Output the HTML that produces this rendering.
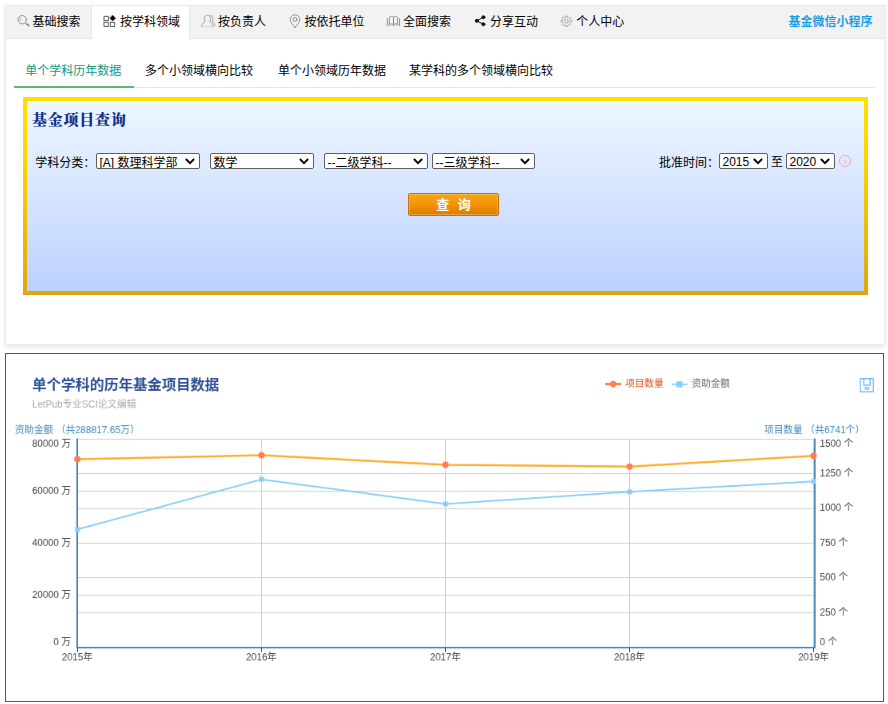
<!DOCTYPE html>
<html lang="zh-CN">
<head>
<meta charset="utf-8">
<title>基金项目查询</title>
<style>
html,body{margin:0;padding:0;}
body{width:888px;height:704px;position:relative;overflow:hidden;background:#fff;
  font-family:"Liberation Sans","Noto Sans CJK SC",sans-serif;font-size:12px;color:#000;}
.abs{position:absolute;}
#card{position:absolute;left:5px;top:5px;width:877.5px;height:337.5px;border:1px solid #eaeaea;background:#fff;
  box-shadow:0 2px 5px 0 rgba(0,0,0,.1);}
#tabbar{position:absolute;left:0;top:0;width:100%;height:32px;background:#f2f2f2;border-bottom:1px solid #e6e6e6;}
.tab{position:absolute;top:0;height:32px;line-height:33px;white-space:nowrap;font-size:12px;color:#000;}
.tab.on{background:#fff;height:33px;border-left:1px solid #e6e6e6;border-right:1px solid #e6e6e6;}
.tab svg{position:absolute;top:9px;}
.tab span{position:absolute;top:0;}
#wx{position:absolute;right:11px;top:0;line-height:33px;font-weight:bold;color:#1a9fe6;font-size:12px;}
.sub{position:absolute;top:52px;height:28px;line-height:26px;font-size:12px;white-space:nowrap;color:#000;}
.sub.on{color:#0f9a85;}
#subline{position:absolute;left:8px;top:81px;width:861px;height:1px;background:#e6e6e6;}
#subon{position:absolute;left:8px;top:80px;width:120px;height:2px;background:#5fb878;}
#qbox{position:absolute;left:17px;top:91px;width:845px;height:198px;background:linear-gradient(#ffe000,#ffd400 30%,#e0a512);}
#qin{position:absolute;left:4px;top:4px;right:4px;bottom:4px;background:linear-gradient(#eef7ff,#bdd1ff);}
#qtitle{position:absolute;left:9px;top:11.5px;font-family:"Liberation Serif","Noto Serif CJK SC",serif;font-weight:900;font-size:15px;letter-spacing:0.75px;color:#10308c;line-height:22px;white-space:nowrap;}
.lbl{position:absolute;font-size:12px;line-height:16px;white-space:nowrap;color:#000;}
.sel{position:absolute;top:56px;height:14px;border:1px solid #5f5f5f;border-radius:2px;background:#fff;font-size:12px;line-height:15px;white-space:nowrap;overflow:hidden;}
.sel span{position:absolute;left:2.5px;top:2px;}
.sel svg{position:absolute;right:4px;top:4px;}
#btn{position:absolute;left:385px;top:96px;width:89px;height:21px;border:1px solid #c8700a;border-radius:2px;
  background:linear-gradient(#f7a51a 0%,#f29707 45%,#dc7b04 100%);box-shadow:inset 0 0 0 1px rgba(255,205,120,.45);color:#fff;font-weight:bold;font-size:13px;line-height:21px;text-align:center;word-spacing:4.7px;}
#chart{overflow:hidden;position:absolute;left:5px;top:353px;width:877px;height:347px;border:1px solid #3b5ba0;background:#fff;}
</style>
</head>
<body>
<div id="card">
  <div id="tabbar">
    <div class="tab" style="left:0;width:86px;"><span style="left:26.5px">基础搜索</span></div>
    <div class="tab on" style="left:85px;width:97px;"><span style="left:28px">按学科领域</span></div>
    <div class="tab" style="left:184px;width:87px;"><span style="left:28px">按负责人</span></div>
    <div class="tab" style="left:271px;width:98px;"><span style="left:27.5px">按依托单位</span></div>
    <div class="tab" style="left:369px;width:87px;"><span style="left:28px">全面搜索</span></div>
    <div class="tab" style="left:456px;width:87px;"><span style="left:28px">分享互动</span></div>
    <div class="tab" style="left:543px;width:87px;"><span style="left:27.3px">个人中心</span></div>
<svg class="abs" style="left:0;top:0" width="640" height="32" viewBox="6 6 640 32" fill="none" stroke-linecap="round" stroke-linejoin="round">
<g stroke="#8a8a8a" stroke-width="0.9">
<circle cx="22.2" cy="19.7" r="4.2"/><path d="M25.3 22.8L26.6 23.9"/><path d="M26.8 24L28.9 25.7" stroke-width="1.7"/>
<path d="M20.2 18.2V21.2" stroke-width="0.6"/>
</g>
<g stroke="#555" stroke-width="0.9" stroke-linejoin="miter">
<rect x="104" y="16.3" width="4.3" height="4.3"/><rect x="104" y="22.3" width="4.3" height="4.2"/><rect x="110.4" y="22.3" width="4.3" height="4.2"/>
<path d="M112.7 15.3L115.6 18.2L112.7 21.1L109.8 18.2Z" fill="#000" stroke="#000" stroke-width="0.4"/>
</g>
<g stroke="#8c8c8c" stroke-width="0.75">
<path d="M201.9 26.4V25C201.9 23.6 203.8 22.7 205.4 21.6C203.6 20.4 203.7 15.3 207.4 15.3C211.1 15.3 211.2 20.4 209.4 21.6C211 22.7 212.9 23.6 212.9 25V26.4"/>
<path d="M201.9 26.5H212.9" stroke-opacity="0.35"/>
<path d="M210.2 15.5C213.4 15.6 213.9 19.6 212 21.4C213.3 22.3 214.7 23 214.7 24.4V25.6"/>
</g>
<g stroke="#8a8a8a" stroke-width="0.9">
<path d="M295 27.4C292.6 24.6 290.2 22.2 290.2 19.6A4.8 4.8 0 0 1 299.8 19.6C299.8 22.2 297.4 24.6 295 27.4Z"/>
<circle cx="295" cy="19.4" r="2"/>
</g>
<g stroke="#8a8a8a" stroke-width="0.9">
<path d="M389.3 24.1V18C389.3 16.7 390.3 16.3 391.4 16.3C392.5 16.3 393.5 16.7 393.5 18V24.5C392.5 23.8 390.5 23.7 389.3 24.1Z"/>
<path d="M397.7 24.1V18C397.7 16.7 396.7 16.3 395.6 16.3C394.5 16.3 393.5 16.7 393.5 18V24.5C394.5 23.8 396.5 23.7 397.7 24.1Z"/>
<path d="M387.3 18.8V25.5M399.6 18.8V25.5M393.5 24.6V25.6"/>
<path d="M387.3 25.5C389.5 25 392 25 393.5 25.7C395 25 397.5 25 399.6 25.5" stroke-opacity="0.4"/>
</g>
<g stroke="#111" stroke-width="1" fill="#111">
<path d="M483.4 17.2L476.8 20.8L483.4 24.3" fill="none"/>
<circle cx="476.8" cy="20.8" r="1.5"/><circle cx="483.4" cy="17.2" r="1.5"/><circle cx="483.4" cy="24.3" r="1.5"/>
</g>
<g stroke="#909090" stroke-width="0.7">
<circle cx="566.4" cy="21.3" r="1.9"/>
<path d="M565.45 17.41L565.50 16.08L567.30 16.08L567.35 17.41L568.48 17.88L569.46 16.97L570.73 18.24L569.82 19.22L570.29 20.35L571.62 20.40L571.62 22.20L570.29 22.25L569.82 23.38L570.73 24.36L569.46 25.63L568.48 24.72L567.35 25.19L567.30 26.52L565.50 26.52L565.45 25.19L564.32 24.72L563.34 25.63L562.07 24.36L562.98 23.38L562.51 22.25L561.18 22.20L561.18 20.40L562.51 20.35L562.98 19.22L562.07 18.24L563.34 16.97L564.32 17.88Z"/>
</g>
</svg>
    <div id="wx">基金微信小程序</div>
  </div>
  <div class="sub on" style="left:19.3px">单个学科历年数据</div>
  <div class="sub" style="left:139px">多个小领域横向比较</div>
  <div class="sub" style="left:272px">单个小领域历年数据</div>
  <div class="sub" style="left:403px">某学科的多个领域横向比较</div>
  <div id="subline"></div>
  <div id="subon"></div>
  <div id="qbox"><div id="qin"></div>
    <div id="qtitle">基金项目查询</div>
    <div class="lbl" style="left:12.2px;top:58.3px">学科分类：</div>
    <div class="sel" style="left:73px;width:102px"><span>[A] 数理科学部</span><svg width="10" height="7" viewBox="0 0 10 7"><path d="M0.9 1L5 5.2L9.1 1" fill="none" stroke="#000" stroke-width="1.9"/></svg></div>
    <div class="sel" style="left:187px;width:102px"><span>数学</span><svg width="10" height="7" viewBox="0 0 10 7"><path d="M0.9 1L5 5.2L9.1 1" fill="none" stroke="#000" stroke-width="1.9"/></svg></div>
    <div class="sel" style="left:301px;width:102px"><span>--二级学科--</span><svg width="10" height="7" viewBox="0 0 10 7"><path d="M0.9 1L5 5.2L9.1 1" fill="none" stroke="#000" stroke-width="1.9"/></svg></div>
    <div class="sel" style="left:409px;width:101px"><span>--三级学科--</span><svg width="10" height="7" viewBox="0 0 10 7"><path d="M0.9 1L5 5.2L9.1 1" fill="none" stroke="#000" stroke-width="1.9"/></svg></div>
    <div class="lbl" style="left:636px;top:58.3px">批准时间：</div>
    <div class="sel" style="left:696px;width:47px"><span style="top:0.7px">2015</span><svg width="10" height="7" viewBox="0 0 10 7"><path d="M0.9 1L5 5.2L9.1 1" fill="none" stroke="#000" stroke-width="1.9"/></svg></div>
    <div class="lbl" style="left:748px;top:57.3px">至</div>
    <div class="sel" style="left:763px;width:47px"><span style="top:0.7px">2020</span><svg width="10" height="7" viewBox="0 0 10 7"><path d="M0.9 1L5 5.2L9.1 1" fill="none" stroke="#000" stroke-width="1.9"/></svg></div>
    <svg class="abs" style="left:815px;top:57px" width="14" height="14" viewBox="0 0 14 14"><circle cx="7" cy="7" r="5.6" fill="none" stroke="#f7a3b0" stroke-width="0.9"/><path d="M7 6.2V9.8" stroke="#f7a3b0" stroke-width="1"/><circle cx="7" cy="4.3" r="0.6" fill="#f7a3b0"/></svg>
    <div id="btn">查 询</div>
  </div>
</div>
<div id="chart">
<svg class="abs" style="left:0;top:0;transform:scale(0.8);transform-origin:0 0;will-change:transform" width="1096.25" height="433.75" viewBox="5.8 354.2 877 347" font-family="'Liberation Sans','Noto Sans CJK SC',sans-serif">
<line x1="77" x2="813.8" y1="439.4" y2="439.4" stroke="#ccc" stroke-width="0.8"/>
<line x1="77" x2="813.8" y1="473.8" y2="473.8" stroke="#ccc" stroke-width="0.8"/>
<line x1="77" x2="813.8" y1="491.4" y2="491.4" stroke="#ccc" stroke-width="0.8"/>
<line x1="77" x2="813.8" y1="509.0" y2="509.0" stroke="#ccc" stroke-width="0.8"/>
<line x1="77" x2="813.8" y1="543.4" y2="543.4" stroke="#ccc" stroke-width="0.8"/>
<line x1="77" x2="813.8" y1="577.8" y2="577.8" stroke="#ccc" stroke-width="0.8"/>
<line x1="77" x2="813.8" y1="595.4" y2="595.4" stroke="#ccc" stroke-width="0.8"/>
<line x1="77" x2="813.8" y1="613.0" y2="613.0" stroke="#ccc" stroke-width="0.8"/>
<line x1="77" x2="813.8" y1="647.4" y2="647.4" stroke="#ccc" stroke-width="0.8"/>
<line x1="77.4" x2="77.4" y1="439.4" y2="647.4" stroke="#ccc" stroke-width="0.8"/>
<line x1="261.4" x2="261.4" y1="439.4" y2="647.4" stroke="#ccc" stroke-width="0.8"/>
<line x1="445.4" x2="445.4" y1="439.4" y2="647.4" stroke="#ccc" stroke-width="0.8"/>
<line x1="629.4" x2="629.4" y1="439.4" y2="647.4" stroke="#ccc" stroke-width="0.8"/>
<line x1="813.4" x2="813.4" y1="439.4" y2="647.4" stroke="#ccc" stroke-width="0.8"/>
<line x1="77" x2="77" y1="438.6" y2="648.6" stroke="#4488bb" stroke-width="1.6"/>
<line x1="814.6" x2="814.6" y1="438.6" y2="648.6" stroke="#4488bb" stroke-width="1.6"/>
<line x1="76.2" x2="815.4" y1="647.8" y2="647.8" stroke="#4488bb" stroke-width="1.6"/>
<line x1="77.4" x2="77.4" y1="648.6" y2="652.2" stroke="#333" stroke-width="0.8"/>
<line x1="261.4" x2="261.4" y1="648.6" y2="652.2" stroke="#333" stroke-width="0.8"/>
<line x1="445.4" x2="445.4" y1="648.6" y2="652.2" stroke="#333" stroke-width="0.8"/>
<line x1="629.4" x2="629.4" y1="648.6" y2="652.2" stroke="#333" stroke-width="0.8"/>
<line x1="813.4" x2="813.4" y1="648.6" y2="652.2" stroke="#333" stroke-width="0.8"/>
<polyline points="77.2,529.65 261.3,479.55 445.3,504.25 629.35,492.05 813.4,481.55" fill="none" stroke="#87cefa" stroke-width="1.6"/>
<rect x="74.80" y="527.25" width="4.8" height="4.8" fill="#87cefa"/>
<rect x="258.90" y="477.15" width="4.8" height="4.8" fill="#87cefa"/>
<rect x="442.90" y="501.85" width="4.8" height="4.8" fill="#87cefa"/>
<rect x="626.95" y="489.65" width="4.8" height="4.8" fill="#87cefa"/>
<rect x="811.00" y="479.15" width="4.8" height="4.8" fill="#87cefa"/>
<polyline points="77.2,459.45 261.3,455.45 445.3,465.05 629.35,466.75 813.4,456.05" fill="none" stroke="#ffae2e" stroke-width="2.1"/>
<circle cx="77.2" cy="459.45" r="3.2" fill="#ff7f50"/>
<circle cx="261.3" cy="455.45" r="3.2" fill="#ff7f50"/>
<circle cx="445.3" cy="465.05" r="3.2" fill="#ff7f50"/>
<circle cx="629.35" cy="466.75" r="3.2" fill="#ff7f50"/>
<circle cx="813.4" cy="456.05" r="3.2" fill="#ff7f50"/>
<text x="70.9" y="447.0" font-size="9.6" fill="#444" text-anchor="end">80000 万</text>
<text x="70.9" y="494.1" font-size="9.6" fill="#444" text-anchor="end">60000 万</text>
<text x="70.9" y="546.1" font-size="9.6" fill="#444" text-anchor="end">40000 万</text>
<text x="70.9" y="598.1" font-size="9.6" fill="#444" text-anchor="end">20000 万</text>
<text x="70.9" y="645.4" font-size="9.6" fill="#444" text-anchor="end">0 万</text>
<text x="819.6" y="447.0" font-size="9.6" fill="#444">1500 个</text>
<text x="819.6" y="476.8" font-size="9.6" fill="#444">1250 个</text>
<text x="819.6" y="511.4" font-size="9.6" fill="#444">1000 个</text>
<text x="819.6" y="546.1" font-size="9.6" fill="#444">750 个</text>
<text x="819.6" y="580.8" font-size="9.6" fill="#444">500 个</text>
<text x="819.6" y="615.5" font-size="9.6" fill="#444">250 个</text>
<text x="819.6" y="645.4" font-size="9.6" fill="#444">0 个</text>
<text x="77.1" y="660.9" font-size="9.6" fill="#444" text-anchor="middle">2015年</text>
<text x="261.2" y="660.9" font-size="9.6" fill="#444" text-anchor="middle">2016年</text>
<text x="445.3" y="660.9" font-size="9.6" fill="#444" text-anchor="middle">2017年</text>
<text x="629.35" y="660.9" font-size="9.6" fill="#444" text-anchor="middle">2018年</text>
<text x="813.4" y="660.9" font-size="9.6" fill="#444" text-anchor="middle">2019年</text>
<text x="14.7" y="433.7" font-size="9.6" fill="#4488bb">资助金额 （共288817.65万）</text>
<text x="864.7" y="433.7" font-size="9.6" fill="#4488bb" text-anchor="end">项目数量 （共6741个）</text>
<text x="32" y="390.5" font-size="14.4" font-weight="bold" fill="#2f4f96">单个学科的历年基金项目数据</text>
<text x="32" y="408" font-size="9.6" fill="#aaa">LetPub专业SCI论文编辑</text>
<line x1="605" x2="621" y1="384.2" y2="384.2" stroke="#ff7f50" stroke-width="2.4"/><circle cx="613" cy="384.2" r="3.3" fill="#ff7f50"/>
<text x="625" y="387.4" font-size="9.6" font-weight="500" fill="#e06c3a">项目数量</text>
<line x1="671.3" x2="687.3" y1="384.5" y2="384.5" stroke="#87cefa" stroke-width="1.5"/><rect x="676.3" y="381.5" width="6" height="6" fill="#87cefa"/>
<text x="691.5" y="387.4" font-size="9.6" fill="#666">资助金额</text>
<g fill="none" stroke="#1e90ff" stroke-opacity="0.65" stroke-width="1.1"><rect x="860.2" y="378.8" width="13" height="13.2" rx="0.4"/><path d="M863.6 378.8V385.4H870V378.8"/><rect x="864.8" y="387.5" width="3.8" height="2" rx="0.8"/></g>
</svg>
</div>
</body>
</html>
